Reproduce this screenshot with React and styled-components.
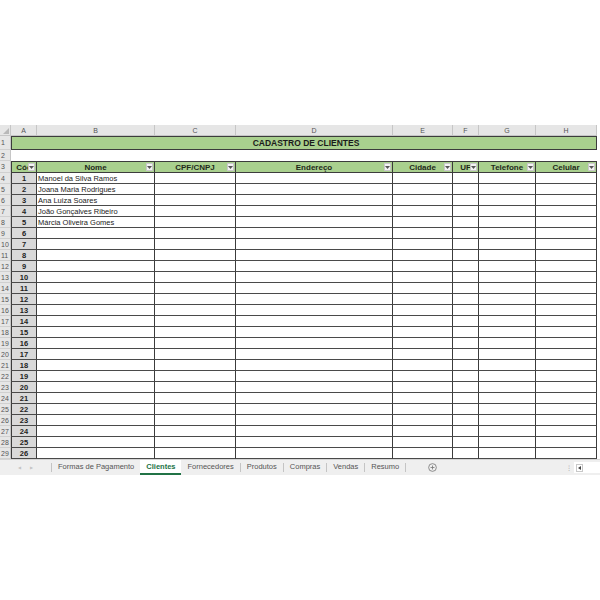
import React from 'react';
import { styled, createGlobalStyle } from 'styled-components';

const GlobalStyle = createGlobalStyle`
  html, body {
    margin: 0;
    padding: 0;
    background: #fff;
  }
  body {
    font-family: "Liberation Sans", Arial, sans-serif;
  }
`;

const COLS = '11px 26px 118px 81px 157px 60px 26px 57px 61px';
const green = '#a9d08e';
const line = '#3c3c3c';

const letters = ['A', 'B', 'C', 'D', 'E', 'F', 'G', 'H'];
const headers = ['Cód', 'Nome', 'CPF/CNPJ', 'Endereço', 'Cidade', 'UF', 'Telefone', 'Celular'];
const names = [
  'Manoel da Silva Ramos',
  'Joana Maria Rodrigues',
  'Ana Luiza Soares',
  'João Gonçalves Ribeiro',
  'Márcia Oliveira Gomes',
];
const tabs = ['Formas de Pagamento', 'Clientes', 'Fornecedores', 'Produtos', 'Compras', 'Vendas', 'Resumo'];

const rows = Array.from({ length: 26 }, (_, i) => ({
  excel: i + 4,
  code: i + 1,
  name: names[i] || '',
}));

const App = () => {
  return (
    <>
      <GlobalStyle />
      <Page>
        <Workbook>
          <Row $h={11}>
            <Corner>
              <CornerMark />
            </Corner>
            {letters.map((l) => (
              <ColHead key={l}>{l}</ColHead>
            ))}
          </Row>

          <Row $h={14}>
            <RowHead>1</RowHead>
            <TitleCell>CADASTRO DE CLIENTES</TitleCell>
          </Row>

          <Row $h={11}>
            <RowHead>2</RowHead>
            <Blank />
          </Row>

          <Row $h={12}>
            <RowHead>3</RowHead>
            {headers.map((h) => (
              <HeadCell key={h}>
                <HeadText>{h}</HeadText>
                <Filter>
                  <svg width="5" height="3" viewBox="0 0 5 3">
                    <path d="M0 0 L5 0 L2.5 3 Z" fill="#555" />
                  </svg>
                </Filter>
              </HeadCell>
            ))}
          </Row>

          {rows.map((r) => (
            <Row $h={11} key={r.excel}>
              <RowHead>{r.excel}</RowHead>
              <CodeCell>{r.code}</CodeCell>
              <Cell>{r.name}</Cell>
              {[0, 1, 2, 3, 4, 5].map((k) => (
                <Cell key={k} />
              ))}
            </Row>
          ))}

          <TabBar>
            <Nav>
              <NavArrow>◀</NavArrow>
              <NavArrow>▶</NavArrow>
            </Nav>
            <Sep />
            {tabs.map((t, i) => (
              <React.Fragment key={t}>
                <Tab $active={t === 'Clientes'}>{t}</Tab>
                {t !== 'Clientes' && tabs[i + 1] !== 'Clientes' && <Sep />}
              </React.Fragment>
            ))}
            <AddSheet>
              <svg width="9" height="9" viewBox="0 0 10 10">
                <circle cx="5" cy="5" r="4.3" fill="none" stroke="#777" strokeWidth="0.9" />
                <path d="M5 2.8 V7.2 M2.8 5 H7.2" stroke="#777" strokeWidth="0.9" />
              </svg>
            </AddSheet>
            <Spacer />
            <Dots>⁝</Dots>
            <Scroll>
              <ScrollBtn>
                <svg width="3" height="4" viewBox="0 0 3 4">
                  <path d="M3 0 L0 2 L3 4 Z" fill="#444" />
                </svg>
              </ScrollBtn>
            </Scroll>
          </TabBar>
        </Workbook>
      </Page>
    </>
  );
};

export default App;

const Page = styled.div`
  width: 600px;
  height: 600px;
  padding-top: 125px;
  box-sizing: border-box;
  background: #fff;
`;

const Workbook = styled.div`
  width: 600px;
  display: flex;
  flex-direction: column;
`;

const Row = styled.div`
  display: grid;
  grid-template-columns: ${COLS};
  height: ${(p) => p.$h}px;
`;

const Corner = styled.div`
  background: #e6e6e6;
  border-right: 1px solid #c6c6c6;
  border-bottom: 1px solid #c6c6c6;
  box-sizing: border-box;
  position: relative;
`;

const CornerMark = styled.div`
  position: absolute;
  right: 1px;
  bottom: 1px;
  width: 0;
  height: 0;
  border-left: 6px solid transparent;
  border-bottom: 6px solid #b8b8b8;
`;

const ColHead = styled.div`
  background: #e6e6e6;
  border-right: 1px solid #c6c6c6;
  border-bottom: 1px solid #c6c6c6;
  box-sizing: border-box;
  color: #555;
  font-size: 7px;
  display: flex;
  align-items: center;
  justify-content: center;
`;

const RowHead = styled.div`
  background: #e6e6e6;
  border-right: 1px solid #c6c6c6;
  border-bottom: 1px solid #d0d0d0;
  box-sizing: border-box;
  color: #555;
  font-size: 7px;
  display: flex;
  align-items: center;
  padding-left: 1px;
`;

const TitleCell = styled.div`
  grid-column: span 8;
  background: ${green};
  border: 1px solid ${line};
  box-sizing: border-box;
  color: #1b1b1b;
  font-size: 8.5px;
  font-weight: 700;
  display: flex;
  align-items: center;
  justify-content: center;
  padding-left: 4px;
`;

const Blank = styled.div`
  grid-column: span 8;
  background: #fff;
`;

const HeadCell = styled.div`
  background: ${green};
  border-top: 1px solid ${line};
  border-right: 1px solid ${line};
  border-bottom: 1px solid ${line};
  box-sizing: border-box;
  display: flex;
  align-items: center;
  position: relative;
  overflow: hidden;
  &:nth-child(2) {
    border-left: 1px solid ${line};
  }
`;

const HeadText = styled.span`
  flex: 1;
  text-align: center;
  font-size: 8px;
  font-weight: 700;
  color: #1f2a1a;
  white-space: nowrap;
  overflow: hidden;
`;

const Filter = styled.div`
  position: absolute;
  right: 1px;
  top: 1px;
  width: 7px;
  height: 8px;
  background: #f3f3f3;
  border: 1px solid #c8c8c8;
  box-sizing: border-box;
  display: flex;
  align-items: center;
  justify-content: center;
`;

const Cell = styled.div`
  background: #fff;
  border-right: 1px solid ${line};
  border-bottom: 1px solid #4a4a4a;
  box-sizing: border-box;
  font-size: 7.5px;
  color: #222;
  display: flex;
  align-items: center;
  padding-left: 1px;
  white-space: nowrap;
  overflow: hidden;
`;

const CodeCell = styled(Cell)`
  background: #d9d9d9;
  border-left: 1px solid ${line};
  justify-content: center;
  font-weight: 700;
  padding-left: 0;
`;

const TabBar = styled.div`
  height: 16px;
  background: #efefef;
  border-top: 1px solid #d4d4d4;
  box-sizing: border-box;
  display: flex;
  align-items: stretch;
  font-size: 7.5px;
  color: #555;
`;

const Nav = styled.div`
  width: 51px;
  display: flex;
  align-items: center;
  justify-content: center;
  gap: 9px;
`;

const NavArrow = styled.span`
  font-size: 4px;
  color: #c4c4c4;
`;

const Sep = styled.div`
  width: 1px;
  background: #c4c4c4;
  margin: 3px 0;
`;

const Tab = styled.div`
  display: flex;
  align-items: center;
  padding: 0 ${(p) => (p.$active ? 6 : 6)}px;
  white-space: nowrap;
  background: ${(p) => (p.$active ? '#fff' : 'transparent')};
  color: ${(p) => (p.$active ? '#217346' : '#555')};
  font-weight: ${(p) => (p.$active ? 700 : 400)};
  border-bottom: 2px solid ${(p) => (p.$active ? '#217346' : 'transparent')};
  box-sizing: border-box;
`;

const AddSheet = styled.div`
  display: flex;
  align-items: center;
  margin-left: 22px;
`;

const Spacer = styled.div`
  flex: 1;
`;

const Dots = styled.div`
  display: flex;
  align-items: center;
  color: #b0b0b0;
  font-size: 8px;
  margin-right: 4px;
`;

const Scroll = styled.div`
  width: 24px;
  background: #fff;
  display: flex;
  align-items: center;
  padding-left: 2px;
  margin: 2px 0;
`;

const ScrollBtn = styled.div`
  width: 7px;
  height: 8px;
  border: 1px solid #c8c8c8;
  box-sizing: border-box;
  display: flex;
  align-items: center;
  justify-content: center;
`;
